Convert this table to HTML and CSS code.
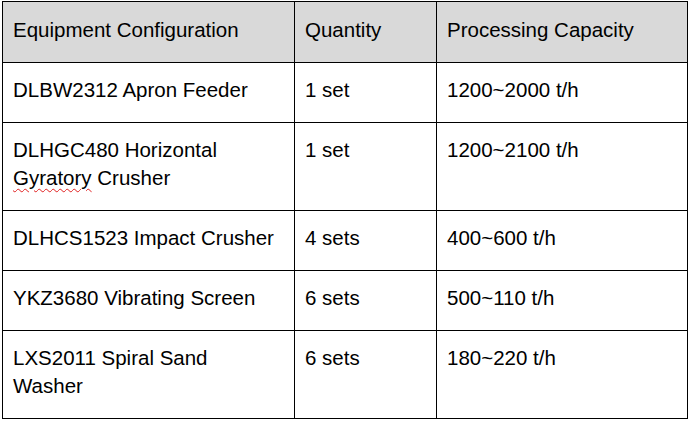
FILE: index.html
```html
<!DOCTYPE html>
<html lang="en">
<head>
<meta charset="utf-8">
<title>Equipment Configuration</title>
<link rel="stylesheet" href="styles.css">
</head>
<body>
<table class="spec">
  <colgroup>
    <col class="c1">
    <col class="c2">
    <col class="c3">
  </colgroup>
  <thead>
    <tr class="head">
      <th>Equipment Configuration</th>
      <th>Quantity</th>
      <th>Processing Capacity</th>
    </tr>
  </thead>
  <tbody>
    <tr>
      <td>DLBW2312 Apron Feeder</td>
      <td>1 set</td>
      <td>1200~2000 t/h</td>
    </tr>
    <tr>
      <td>DLHGC480 Horizontal<br><span class="spell">Gyratory</span> Crusher</td>
      <td>1 set</td>
      <td>1200~2100 t/h</td>
    </tr>
    <tr>
      <td>DLHCS1523 Impact Crusher</td>
      <td>4 sets</td>
      <td>400~600 t/h</td>
    </tr>
    <tr>
      <td>YKZ3680 Vibrating Screen</td>
      <td>6 sets</td>
      <td>500~110 t/h</td>
    </tr>
    <tr>
      <td>LXS2011 Spiral Sand<br>Washer</td>
      <td>6 sets</td>
      <td>180~220 t/h</td>
    </tr>
  </tbody>
</table>
</body>
</html>
```
FILE: styles.css
```css
html, body {
  margin: 0;
  padding: 0;
  background: #ffffff;
}

.spec {
  margin: 1px 0 0 2px;
  width: 686px;
  table-layout: fixed;
  border-collapse: separate;
  border-spacing: 0;
  border-left: 1px solid #000;
  border-top: 1px solid #000;
  font-family: "Liberation Sans", Arial, sans-serif;
  font-size: 20.5px;
  line-height: 28px;
  color: #000;
}

.c1 { width: 292px; }
.c2 { width: 142px; }
.c3 { width: 251px; }

.spec th,
.spec td {
  box-sizing: border-box;
  padding: 13px 8px 18px 10px;
  border-right: 1px solid #000;
  border-bottom: 1px solid #000;
  text-align: left;
  vertical-align: top;
  font-weight: normal;
  white-space: nowrap;
}

.head th {
  background: #d9d9d9;
  padding-top: 14px;
}

.spell {
  text-decoration: underline wavy #e02020;
  text-decoration-thickness: 1px;
  text-underline-offset: 3px;
}
```
